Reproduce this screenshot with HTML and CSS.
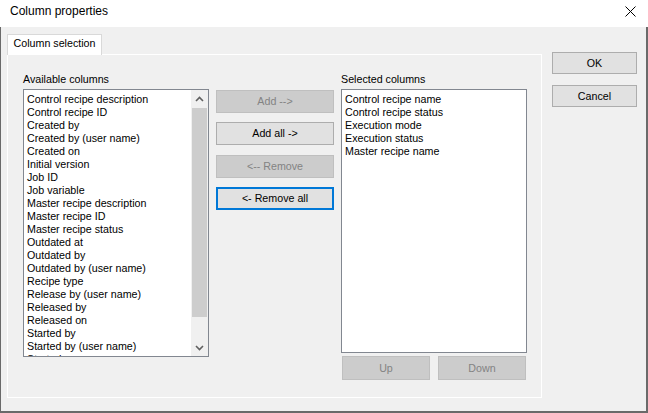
FILE: index.html
```html
<!DOCTYPE html>
<html lang="en">
<head>
<meta charset="utf-8">
<title>Column properties</title>
<link rel="stylesheet" href="styles.css">
</head>
<body>
<div class="window">
  <div class="titlebar">
    <span class="title">Column properties</span>
    <svg class="close" width="11" height="11" viewBox="0 0 11 11"><path d="M0.5 0.5 L10.5 10.5 M10.5 0.5 L0.5 10.5" stroke="#000" stroke-width="1" fill="none"/></svg>
  </div>
  <div class="body">
    <div class="tabctl">
      <div class="tabstrip"><div class="tab">Column selection</div></div>
      <div class="panel">
        <div class="col col-list">
          <div class="label">Available columns</div>
          <div class="listbox listbox-left">
            <ul class="items">
              <li>Control recipe description</li>
              <li>Control recipe ID</li>
              <li>Created by</li>
              <li>Created by (user name)</li>
              <li>Created on</li>
              <li>Initial version</li>
              <li>Job ID</li>
              <li>Job variable</li>
              <li>Master recipe description</li>
              <li>Master recipe ID</li>
              <li>Master recipe status</li>
              <li>Outdated at</li>
              <li>Outdated by</li>
              <li>Outdated by (user name)</li>
              <li>Recipe type</li>
              <li>Release by (user name)</li>
              <li>Released by</li>
              <li>Released on</li>
              <li>Started by</li>
              <li>Started by (user name)</li>
              <li>Started on</li>
            </ul>
            <div class="vscroll">
              <div class="arrow"><svg width="9" height="6" viewBox="0 0 9 6"><path d="M1 5 L4.5 1.5 L8 5" stroke="#606060" stroke-width="1.6" fill="none"/></svg></div>
              <div class="track"><div class="thumb"></div></div>
              <div class="arrow"><svg width="9" height="6" viewBox="0 0 9 6"><path d="M1 1 L4.5 4.5 L8 1" stroke="#606060" stroke-width="1.6" fill="none"/></svg></div>
            </div>
          </div>
        </div>
        <div class="col col-mid">
          <div class="btn disabled">Add --&gt;</div>
          <div class="btn">Add all -&gt;</div>
          <div class="btn disabled">&lt;-- Remove</div>
          <div class="btn default">&lt;- Remove all</div>
        </div>
        <div class="col col-list">
          <div class="label">Selected columns</div>
          <div class="listbox listbox-right">
            <ul class="items">
              <li>Control recipe name</li>
              <li>Control recipe status</li>
              <li>Execution mode</li>
              <li>Execution status</li>
              <li>Master recipe name</li>
            </ul>
          </div>
          <div class="updown">
            <div class="btn disabled">Up</div>
            <div class="btn disabled">Down</div>
          </div>
        </div>
      </div>
    </div>
    <div class="side">
      <div class="btn side-btn">OK</div>
      <div class="btn side-btn">Cancel</div>
    </div>
  </div>
</div>
</body>
</html>
```

FILE: styles.css
```css
* { box-sizing: border-box; }
html, body { margin: 0; padding: 0; }
body {
  width: 648px;
  height: 413px;
  overflow: hidden;
  background: #f0f0f0;
  color: #000;
  font-family: "Liberation Sans", Arial, sans-serif;
  font-size: 10.7px;
  line-height: 13px;
}
.window {
  width: 648px;
  height: 413px;
  display: flex;
  flex-direction: column;
}
.titlebar {
  height: 27px;
  flex: none;
  background: #fff;
  display: flex;
  align-items: flex-start;
  justify-content: space-between;
  padding: 4px 12px 0 10px;
}
.title {
  font-size: 12px;
  line-height: 14px;
}
.close { margin-top: 2px; }
.body {
  flex: 1;
  display: flex;
  align-items: flex-start;
  border-left: 1px solid #6a6a6a;
  border-right: 2px solid #6a6a6a;
  border-bottom: 2px solid #6a6a6a;
  padding: 7px 0 0 6px;
}
.tabctl {
  width: 535px;
  display: flex;
  flex-direction: column;
}
.tabstrip {
  height: 20px;
  display: flex;
}
.tab {
  position: relative;
  z-index: 1;
  width: 95px;
  height: 21px;
  background: #fff;
  border: 1px solid #d9d9d9;
  border-bottom: none;
  text-align: center;
  padding-top: 2px;
}
.panel {
  height: 344px;
  border: 1px solid #fff;
  display: flex;
  gap: 7px;
  padding: 18px 14px 0 15px;
}
.col { display: flex; flex-direction: column; }
.col-list { width: 186px; }
.label { height: 13px; margin-bottom: 3px; }
.listbox {
  background: #fff;
  border: 1px solid #828790;
  display: flex;
  overflow: hidden;
}
.listbox-left { height: 268px; }
.listbox-right { height: 264px; }
.items {
  list-style: none;
  margin: 0;
  padding: 3px 0 0 3px;
  flex: 1;
  white-space: nowrap;
  overflow: hidden;
}
.items li { height: 13px; }
.vscroll {
  width: 17px;
  flex: none;
  background: #f0f0f0;
  display: flex;
  flex-direction: column;
}
.arrow {
  height: 17px;
  display: flex;
  align-items: center;
  justify-content: center;
}
.track {
  flex: 1;
  padding: 1px 1px 0 1px;
}
.thumb {
  height: 209px;
  background: #cdcdcd;
}
.col-mid {
  width: 118px;
  padding-top: 17px;
  gap: 9.33px;
}
.btn {
  height: 23px;
  background: #e1e1e1;
  border: 1px solid #adadad;
  display: flex;
  align-items: center;
  justify-content: center;
}
.btn.disabled {
  background: #cccccc;
  border-color: #bfbfbf;
  color: #838383;
}
.btn.default {
  border: 2px solid #0078d7;
}
.updown {
  display: flex;
  gap: 8px;
  margin-top: 3px;
  padding-left: 1px;
}
.updown .btn { width: 88px; height: 24px; }
.side {
  width: 85px;
  margin: 18px 0 0 10px;
  display: flex;
  flex-direction: column;
  gap: 11px;
}
.side-btn { height: 22px; }
```
